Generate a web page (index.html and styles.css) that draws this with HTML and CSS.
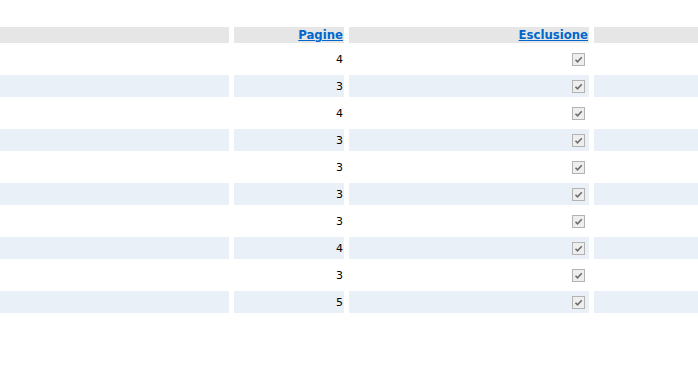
FILE: index.html
```html
<!DOCTYPE html>
<html>
<head>
<meta charset="utf-8">
<link rel="stylesheet" href="styles.css">
</head>
<body>
<div class="table">
  <div class="row head">
    <div class="cell"></div>
    <div class="cell num"><a href="#">Pagine</a></div>
    <div class="cell num"><a href="#">Esclusione</a></div>
    <div class="cell"></div>
  </div>
  <div class="row"><div class="cell"></div><div class="cell num">4</div><div class="cell chk"><span class="box"><svg viewBox="0 0 13 13" width="13" height="13"><path d="M3.5 6.8 L5.5 8.8 L9.8 4.2" fill="none" stroke="#6d6d6d" stroke-width="1.6"/></svg></span></div><div class="cell"></div></div>
  <div class="row alt"><div class="cell"></div><div class="cell num">3</div><div class="cell chk"><span class="box"><svg viewBox="0 0 13 13" width="13" height="13"><path d="M3.5 6.8 L5.5 8.8 L9.8 4.2" fill="none" stroke="#6d6d6d" stroke-width="1.6"/></svg></span></div><div class="cell"></div></div>
  <div class="row"><div class="cell"></div><div class="cell num">4</div><div class="cell chk"><span class="box"><svg viewBox="0 0 13 13" width="13" height="13"><path d="M3.5 6.8 L5.5 8.8 L9.8 4.2" fill="none" stroke="#6d6d6d" stroke-width="1.6"/></svg></span></div><div class="cell"></div></div>
  <div class="row alt"><div class="cell"></div><div class="cell num">3</div><div class="cell chk"><span class="box"><svg viewBox="0 0 13 13" width="13" height="13"><path d="M3.5 6.8 L5.5 8.8 L9.8 4.2" fill="none" stroke="#6d6d6d" stroke-width="1.6"/></svg></span></div><div class="cell"></div></div>
  <div class="row"><div class="cell"></div><div class="cell num">3</div><div class="cell chk"><span class="box"><svg viewBox="0 0 13 13" width="13" height="13"><path d="M3.5 6.8 L5.5 8.8 L9.8 4.2" fill="none" stroke="#6d6d6d" stroke-width="1.6"/></svg></span></div><div class="cell"></div></div>
  <div class="row alt"><div class="cell"></div><div class="cell num">3</div><div class="cell chk"><span class="box"><svg viewBox="0 0 13 13" width="13" height="13"><path d="M3.5 6.8 L5.5 8.8 L9.8 4.2" fill="none" stroke="#6d6d6d" stroke-width="1.6"/></svg></span></div><div class="cell"></div></div>
  <div class="row"><div class="cell"></div><div class="cell num">3</div><div class="cell chk"><span class="box"><svg viewBox="0 0 13 13" width="13" height="13"><path d="M3.5 6.8 L5.5 8.8 L9.8 4.2" fill="none" stroke="#6d6d6d" stroke-width="1.6"/></svg></span></div><div class="cell"></div></div>
  <div class="row alt"><div class="cell"></div><div class="cell num">4</div><div class="cell chk"><span class="box"><svg viewBox="0 0 13 13" width="13" height="13"><path d="M3.5 6.8 L5.5 8.8 L9.8 4.2" fill="none" stroke="#6d6d6d" stroke-width="1.6"/></svg></span></div><div class="cell"></div></div>
  <div class="row"><div class="cell"></div><div class="cell num">3</div><div class="cell chk"><span class="box"><svg viewBox="0 0 13 13" width="13" height="13"><path d="M3.5 6.8 L5.5 8.8 L9.8 4.2" fill="none" stroke="#6d6d6d" stroke-width="1.6"/></svg></span></div><div class="cell"></div></div>
  <div class="row alt"><div class="cell"></div><div class="cell num">5</div><div class="cell chk"><span class="box"><svg viewBox="0 0 13 13" width="13" height="13"><path d="M3.5 6.8 L5.5 8.8 L9.8 4.2" fill="none" stroke="#6d6d6d" stroke-width="1.6"/></svg></span></div><div class="cell"></div></div>
</div>
</body>
</html>
```

FILE: styles.css
```css
html, body {
  margin: 0;
  padding: 0;
  background: #ffffff;
  overflow: hidden;
}
body {
  font-family: "DejaVu Sans", Verdana, sans-serif;
  font-size: 11px;
  color: #000;
}
.table {
  display: flex;
  flex-direction: column;
  gap: 5px;
  padding-top: 27px;
  width: 698px;
}
.row {
  display: grid;
  grid-template-columns: 229px 110px 240px 104px;
  column-gap: 5px;
  height: 22px;
}
.row.head {
  height: 16px;
}
.row.head .cell {
  background: #e6e6e6;
}
.row.alt .cell {
  background: #eaf0f8;
}
.cell {
  display: flex;
  align-items: center;
}
.num {
  justify-content: flex-end;
  padding-right: 1px;
}
.head a {
  color: #0066cc;
  font-weight: bold;
  font-size: 11.7px;
  text-decoration: underline;
}
.chk {
  justify-content: flex-end;
  padding-right: 4px;
}
.box {
  display: block;
  width: 13px;
  height: 13px;
  box-sizing: border-box;
  border: 1px solid #b3b3b3;
  background: #eeeeee;
}
.box svg {
  display: block;
  margin: -1px;
}
```
